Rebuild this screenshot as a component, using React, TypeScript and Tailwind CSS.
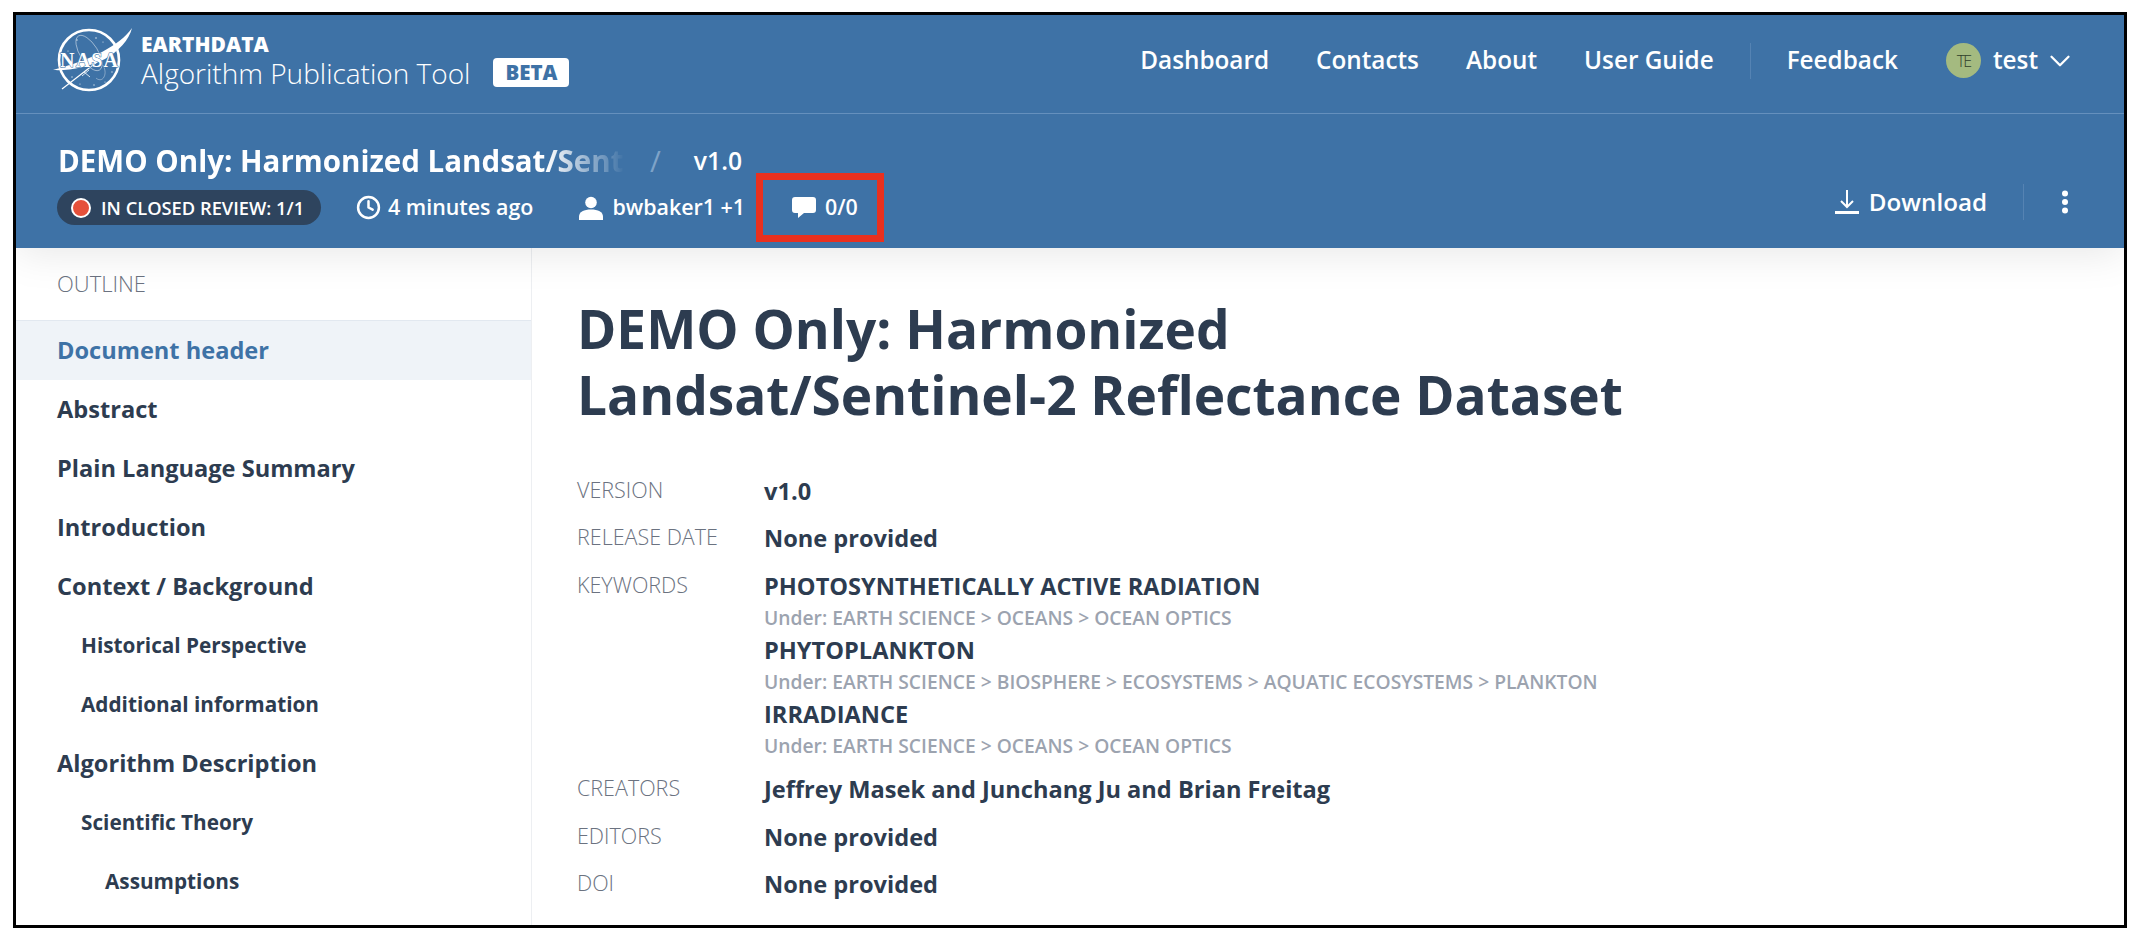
import React from "react";
import { ChevronDown, Clock } from "lucide-react";

const NAV_LINKS = ["Dashboard", "Contacts", "About", "User Guide"];

const OUTLINE = [
  { label: "Abstract", level: 0 },
  { label: "Plain Language Summary", level: 0 },
  { label: "Introduction", level: 0 },
  { label: "Context / Background", level: 0 },
  { label: "Historical Perspective", level: 1 },
  { label: "Additional information", level: 1 },
  { label: "Algorithm Description", level: 0 },
  { label: "Scientific Theory", level: 1 },
  { label: "Assumptions", level: 2 },
];

const KEYWORDS = [
  { name: "PHOTOSYNTHETICALLY ACTIVE RADIATION", path: "Under: EARTH SCIENCE > OCEANS > OCEAN OPTICS" },
  { name: "PHYTOPLANKTON", path: "Under: EARTH SCIENCE > BIOSPHERE > ECOSYSTEMS > AQUATIC ECOSYSTEMS > PLANKTON" },
  { name: "IRRADIANCE", path: "Under: EARTH SCIENCE > OCEANS > OCEAN OPTICS" },
];

function NasaLogo() {
  return (
    <svg width="80" height="68" viewBox="0 0 80 68" className="shrink-0" fill="none">
      <circle cx="36" cy="33" r="30" stroke="#fff" strokeWidth="2.6" />
      {/* orbit */}
      <ellipse cx="36" cy="26" rx="9" ry="20" transform="rotate(-32 36 26)" stroke="#fff" strokeWidth="0.6" opacity="0.75" />
      <path d="M50 38c2 4 3 8 1 12s-6 3-8 1" stroke="#fff" strokeWidth="0.6" opacity="0.6" />
      {/* chevron */}
      <path d="M0 43C18 38 36 32 49 25 62 18 73 10 79 1 76 13 66 24 52 32 36 40 16 44 0 43Z" fill="#fff" />
      <path d="M9 62 53 28" stroke="#fff" strokeWidth="1.2" />
      <path d="M31 45l6 5M36 43l-7 6" stroke="#fff" strokeWidth="0.8" />
      {/* stars */}
      <g fill="#fff" opacity="0.8">
        <circle cx="24" cy="13" r="0.7" />
        <circle cx="43" cy="11" r="0.8" />
        <circle cx="50" cy="15" r="0.6" />
        <circle cx="55" cy="23" r="0.6" />
        <circle cx="15" cy="24" r="0.6" />
        <circle cx="19" cy="50" r="0.7" />
        <circle cx="27" cy="57" r="0.6" />
        <circle cx="41" cy="58" r="0.7" />
        <circle cx="59" cy="45" r="0.7" />
        <circle cx="52" cy="55" r="0.6" />
      </g>
      <text
        x="36"
        y="40"
        textAnchor="middle"
        fill="#fff"
        stroke="#3e72a6"
        strokeWidth="1"
        paintOrder="stroke"
        fontFamily="'Liberation Serif', serif"
        fontWeight="700"
        fontSize="20"
        textLength="58"
        lengthAdjust="spacing"
      >
        NASA
      </text>
    </svg>
  );
}

function UserIcon() {
  return (
    <svg width="26" height="24" viewBox="0 0 26 24" fill="#fff" className="shrink-0">
      <circle cx="13" cy="6.5" r="5.8" />
      <path d="M1 24v-3.5C1 16 6 13.5 13 13.5S25 16 25 20.5V24Z" />
    </svg>
  );
}

function CommentIcon() {
  return (
    <svg width="24" height="21" viewBox="0 0 24 21" fill="#fff" className="shrink-0">
      <path d="M3 0h18a3 3 0 0 1 3 3v10a3 3 0 0 1-3 3H12l-6 5v-5H3a3 3 0 0 1-3-3V3a3 3 0 0 1 3-3Z" />
    </svg>
  );
}

function DownloadIcon() {
  return (
    <svg width="24" height="24" viewBox="0 0 24 24" fill="none" stroke="#fff" className="shrink-0">
      <path d="M12 0v16M6 11l6 6 6-6" strokeWidth="2" />
      <path d="M0 22.5h24" strokeWidth="3" />
    </svg>
  );
}

function MoreIcon() {
  return (
    <svg width="8" height="24" viewBox="0 0 8 24" fill="#fff">
      <circle cx="4" cy="3.5" r="3" />
      <circle cx="4" cy="12" r="3" />
      <circle cx="4" cy="20.5" r="3" />
    </svg>
  );
}

function MetaRow({ label, className, children }: { label: string; className?: string; children: React.ReactNode }) {
  return (
    <div className={`flex ${className ?? ""}`}>
      <div className="w-[187px] shrink-0 text-[21.5px] font-light leading-[32px] text-[#6b7280]">{label}</div>
      <div className="min-w-0 flex-1 pt-[1px]">{children}</div>
    </div>
  );
}

export default function App() {
  return (
    <div className="h-screen w-screen overflow-hidden bg-white pb-[18px] pl-[13px] pr-[13px] pt-3 font-['Open_Sans',sans-serif]">
      <div className="flex h-full flex-col overflow-hidden border-[3px] border-black">
        {/* Blue header */}
        <header className="relative z-10 shrink-0 bg-[#3e72a6] text-white shadow-[0_4px_40px_rgba(0,0,0,0.1)]">
          {/* Top bar */}
          <div className="flex h-[99px] items-center justify-between border-b border-[#6590bd] pb-[7px] pl-[37px] pr-[47px]">
            <div className="flex items-center">
              <NasaLogo />
              <div className="ml-[8px] flex flex-col pt-[2px]">
                <span className="text-[21px] font-extrabold leading-[22px]">EARTHDATA</span>
                <span className="flex items-center text-[28px] font-light leading-[36px]">
                  Algorithm Publication Tool
                  <span className="ml-[23px] rounded-[4px] bg-white px-[12px] text-[20.5px] font-extrabold leading-[29px] text-[#3e72a6]">
                    BETA
                  </span>
                </span>
              </div>
            </div>

            <nav className="flex items-center text-[24.3px] font-semibold">
              <div className="flex gap-[47px]">
                {NAV_LINKS.map((link) => (
                  <a key={link}>{link}</a>
                ))}
              </div>
              <div className="mx-[36px] h-[36px] w-px bg-[#5583b3]" />
              <a>Feedback</a>
              <div className="ml-[48px] flex h-[35px] w-[35px] items-center justify-center rounded-full bg-[#a4ba80] text-[16px] font-light tracking-[-2px] text-[#2f3e2a]">
                TE
              </div>
              <span className="ml-[12px]">test</span>
              <ChevronDown size={34} strokeWidth={1.6} className="ml-[5px]" />
            </nav>
          </div>

          {/* Document bar */}
          <div className="flex h-[134px] items-end justify-between pb-[23px] pl-[41px] pr-[55px]">
            <div>
              <div className="flex items-center pl-[1px] text-[29.5px] font-bold leading-[40px]">
                <span className="w-[567px] overflow-hidden whitespace-nowrap [mask-image:linear-gradient(to_right,black_86%,transparent_100%)]">
                  DEMO Only: Harmonized Landsat/Sent
                </span>
                <span className="ml-[25px] font-normal text-[#7ea3c8]">/</span>
                <span className="ml-[33px] text-[24.7px] font-semibold">v1.0</span>
              </div>
              <div className="mt-[9px] flex items-center text-[21.4px] font-semibold">
                <div className="flex h-[35px] w-[264px] items-center rounded-full bg-[#2e445e] pl-[14px] text-[18.3px]">
                  <span className="h-[20px] w-[20px] rounded-full border-[2px] border-white bg-[#e5503a]" />
                  <span className="ml-[10px]">IN CLOSED REVIEW: 1/1</span>
                </div>
                <Clock size={25} strokeWidth={2.4} className="ml-[35px]" />
                <span className="ml-[7px]">4 minutes ago</span>
                <div className="ml-[45px]">
                  <UserIcon />
                </div>
                <span className="ml-[8px]">bwbaker1 +1</span>
                {/* Red highlight around comment count */}
                <div className="-my-[17px] ml-[11px] flex h-[69px] w-[128px] items-center border-[7px] border-[#e9301f] pl-[29px]">
                  <CommentIcon />
                  <span className="ml-[9px]">0/0</span>
                </div>
              </div>
            </div>

            <div className="flex items-center pb-[5px] text-[24.2px] font-semibold">
              <DownloadIcon />
              <span className="ml-[10px]">Download</span>
              <div className="ml-[36px] h-[36px] w-px bg-[#5583b3]" />
              <div className="ml-[37px]">
                <MoreIcon />
              </div>
            </div>
          </div>
        </header>

        {/* Body */}
        <div className="flex min-h-0 flex-1 overflow-hidden">
          <aside className="w-[516px] shrink-0 border-r border-[#edeff2]">
            <div className="flex h-[72px] items-center px-[41px] pb-[2px] text-[22px] font-light text-[#6b7280]">OUTLINE</div>
            <ul className="text-[23.6px] font-bold leading-[59px] text-[#2d3c50]">
              <li className="border-t border-[#e2e8f0] bg-[#eff3f8] px-[41px] text-[#3e72a6]">Document header</li>
              {OUTLINE.map((item) => (
                <li
                  key={item.label}
                  className={
                    item.level === 0
                      ? "pl-[41px]"
                      : item.level === 1
                        ? "pl-[65px] text-[20.75px]"
                        : "pl-[89px] text-[20.75px]"
                  }
                >
                  {item.label}
                </li>
              ))}
            </ul>
          </aside>

          <main className="min-w-0 flex-1 pl-[45px] pt-[48px] text-[#2d3c50]">
            <h1 className="text-[53.2px] font-bold leading-[66px]">
              DEMO Only: Harmonized
              <br />
              Landsat/Sentinel-2 Reflectance Dataset
            </h1>
            <div className="mt-[46px] flex flex-col text-[23.6px] font-bold leading-[32px]">
              <MetaRow label="VERSION">v1.0</MetaRow>
              <MetaRow label="RELEASE DATE" className="mt-[14px]">
                None provided
              </MetaRow>
              <MetaRow label="KEYWORDS" className="mt-[15px]">
                {KEYWORDS.map((kw) => (
                  <div key={kw.name}>
                    <div>{kw.name}</div>
                    <div className="text-[19.25px] font-semibold text-[#9ca3af]">{kw.path}</div>
                  </div>
                ))}
              </MetaRow>
              <MetaRow label="CREATORS" className="mt-[10px]">
                Jeffrey Masek and Junchang Ju and Brian Freitag
              </MetaRow>
              <MetaRow label="EDITORS" className="mt-[15px]">
                None provided
              </MetaRow>
              <MetaRow label="DOI" className="mt-[14px]">
                None provided
              </MetaRow>
            </div>
          </main>
        </div>
      </div>
    </div>
  );
}
